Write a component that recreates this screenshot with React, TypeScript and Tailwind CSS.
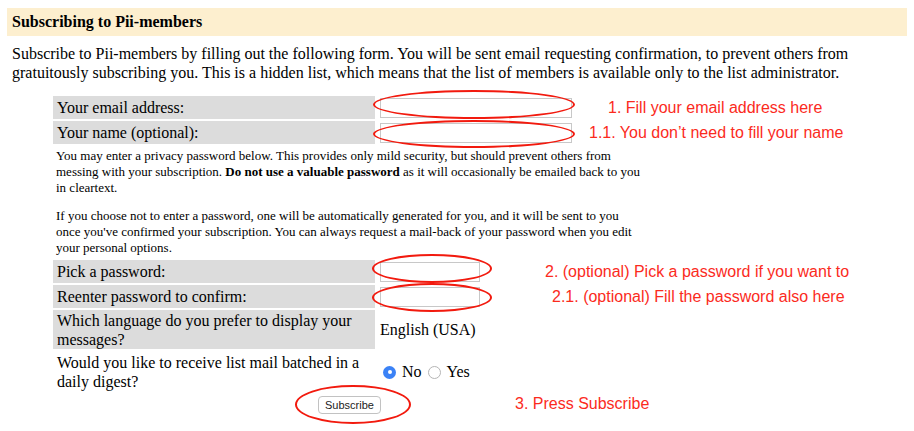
import React from "react";

const red = "text-[#fb2b1d]";

function Ring({ className }: { className: string }) {
  return <span className={`pointer-events-none absolute rounded-[50%] border-2 border-[#f21a0e] ${className}`} />;
}

function TextInput({ w }: { w: string }) {
  return <input type="text" className={`${w} h-[20px] border border-[#c8c8c8] bg-white px-1 text-[13px] outline-none`} />;
}

function Label({ children, grey = true }: { children: React.ReactNode; grey?: boolean }) {
  return (
    <div className={`flex w-[322px] shrink-0 items-center px-[4px] text-[16px] leading-[19px] ${grey ? "bg-[#dcdcdc]" : ""}`}>
      {children}
    </div>
  );
}

export default function App() {
  return (
    <div className="h-[431px] w-[914px] overflow-hidden bg-white font-['Liberation_Serif',serif] text-black">
      <div className="px-[7px] pt-[8px]">
        <div className="flex h-[28px] items-center bg-[#fdefcf] pl-[5px] text-[16px] font-bold">Subscribing to Pii-members</div>
        <p className="mt-[8px] whitespace-nowrap pl-[5px] text-[16px] leading-[19px]">
          Subscribe to Pii-members by filling out the following form. You will be sent email requesting confirmation, to prevent others from
          <br />
          gratuitously subscribing you. This is a hidden list, which means that the list of members is available only to the list administrator.
        </p>
      </div>

      <div className="ml-[53px] mt-[14px] flex w-[593px] flex-col gap-[2px]">
        {/* email */}
        <div className="flex h-[23px]">
          <Label>Your email address:</Label>
          <div className="relative ml-[5px] flex items-center">
            <TextInput w="w-[192px]" />
            <Ring className="-left-[7px] -right-[3px] -top-[6px] bottom-0" />
          </div>
          <span className={`ml-[36px] flex items-center whitespace-nowrap font-['Liberation_Sans',sans-serif] text-[16px] ${red}`}>1. Fill your email address here</span>
        </div>

        {/* name */}
        <div className="flex h-[23px]">
          <Label>Your name (optional):</Label>
          <div className="relative ml-[5px] flex items-center">
            <TextInput w="w-[192px]" />
            <Ring className="-left-[7px] -right-[3px] -top-[1px] -bottom-[4px]" />
          </div>
          <span className={`ml-[17px] flex items-center whitespace-nowrap font-['Liberation_Sans',sans-serif] text-[16px] ${red}`}>1.1. You don’t need to fill your name</span>
        </div>

        {/* note */}
        <div className="whitespace-nowrap px-[3px] py-[2px] text-[13px] leading-[16px]">
          <p>
            You may enter a privacy password below. This provides only mild security, but should prevent others from
            <br />
            messing with your subscription. <b>Do not use a valuable password</b> as it will occasionally be emailed back to you
            <br />
            in cleartext.
          </p>
          <p className="mt-[12px]">
            If you choose not to enter a password, one will be automatically generated for you, and it will be sent to you
            <br />
            once you've confirmed your subscription. You can always request a mail-back of your password when you edit
            <br />
            your personal options.
          </p>
        </div>

        {/* password */}
        <div className="flex h-[23px]">
          <Label>Pick a password:</Label>
          <div className="relative ml-[5px] flex items-center">
            <TextInput w="w-[100px]" />
            <Ring className="-left-[8px] -right-[12px] -top-[6px] -bottom-0" />
          </div>
          <span className={`ml-[65px] flex items-center whitespace-nowrap font-['Liberation_Sans',sans-serif] text-[16px] ${red}`}>2. (optional) Pick a password if you want to</span>
        </div>

        <div className="flex h-[23px]">
          <Label>Reenter password to confirm:</Label>
          <div className="relative ml-[5px] flex items-center">
            <TextInput w="w-[100px]" />
            <Ring className="-left-[8px] -right-[12px] -top-[2px] -bottom-[4px]" />
          </div>
          <span className={`ml-[72px] flex items-center whitespace-nowrap font-['Liberation_Sans',sans-serif] text-[16px] ${red}`}>2.1. (optional) Fill the password also here</span>
        </div>

        {/* language */}
        <div className="flex h-[39px]">
          <Label>
            Which language do you prefer to display your
            <br />
            messages?
          </Label>
          <div className="ml-[5px] flex items-center text-[16px]">English (USA)</div>
        </div>

        {/* digest */}
        <div className="mt-[1px] flex h-[40px]">
          <Label grey={false}>
            Would you like to receive list mail batched in a
            <br />
            daily digest?
          </Label>
          <div className="ml-[8px] flex items-center gap-[6px] text-[16px]">
            <span className="flex h-[13px] w-[13px] items-center justify-center rounded-full bg-[#3b82f6]">
              <span className="h-[4px] w-[4px] rounded-full bg-white" />
            </span>
            <span>No</span>
            <span className="h-[13px] w-[13px] rounded-full border border-[#b5b5b5] bg-white" />
            <span>Yes</span>
          </div>
        </div>

        {/* submit */}
        <div className="relative mt-[1px] flex h-[18px] items-center justify-center">
          <div className="relative">
            <button className="h-[18px] rounded-[4px] border border-[#c2c2c2] bg-white px-[6px] font-['Liberation_Sans',sans-serif] text-[11px] leading-[16px] text-[#222]">
              Subscribe
            </button>
            <Ring className="-left-[23px] -right-[30px] -top-[7px] -bottom-[8px]" />
          </div>
          <span className={`absolute left-[462px] whitespace-nowrap font-['Liberation_Sans',sans-serif] text-[16px] ${red}`}>3. Press Subscribe</span>
        </div>
      </div>
    </div>
  );
}
